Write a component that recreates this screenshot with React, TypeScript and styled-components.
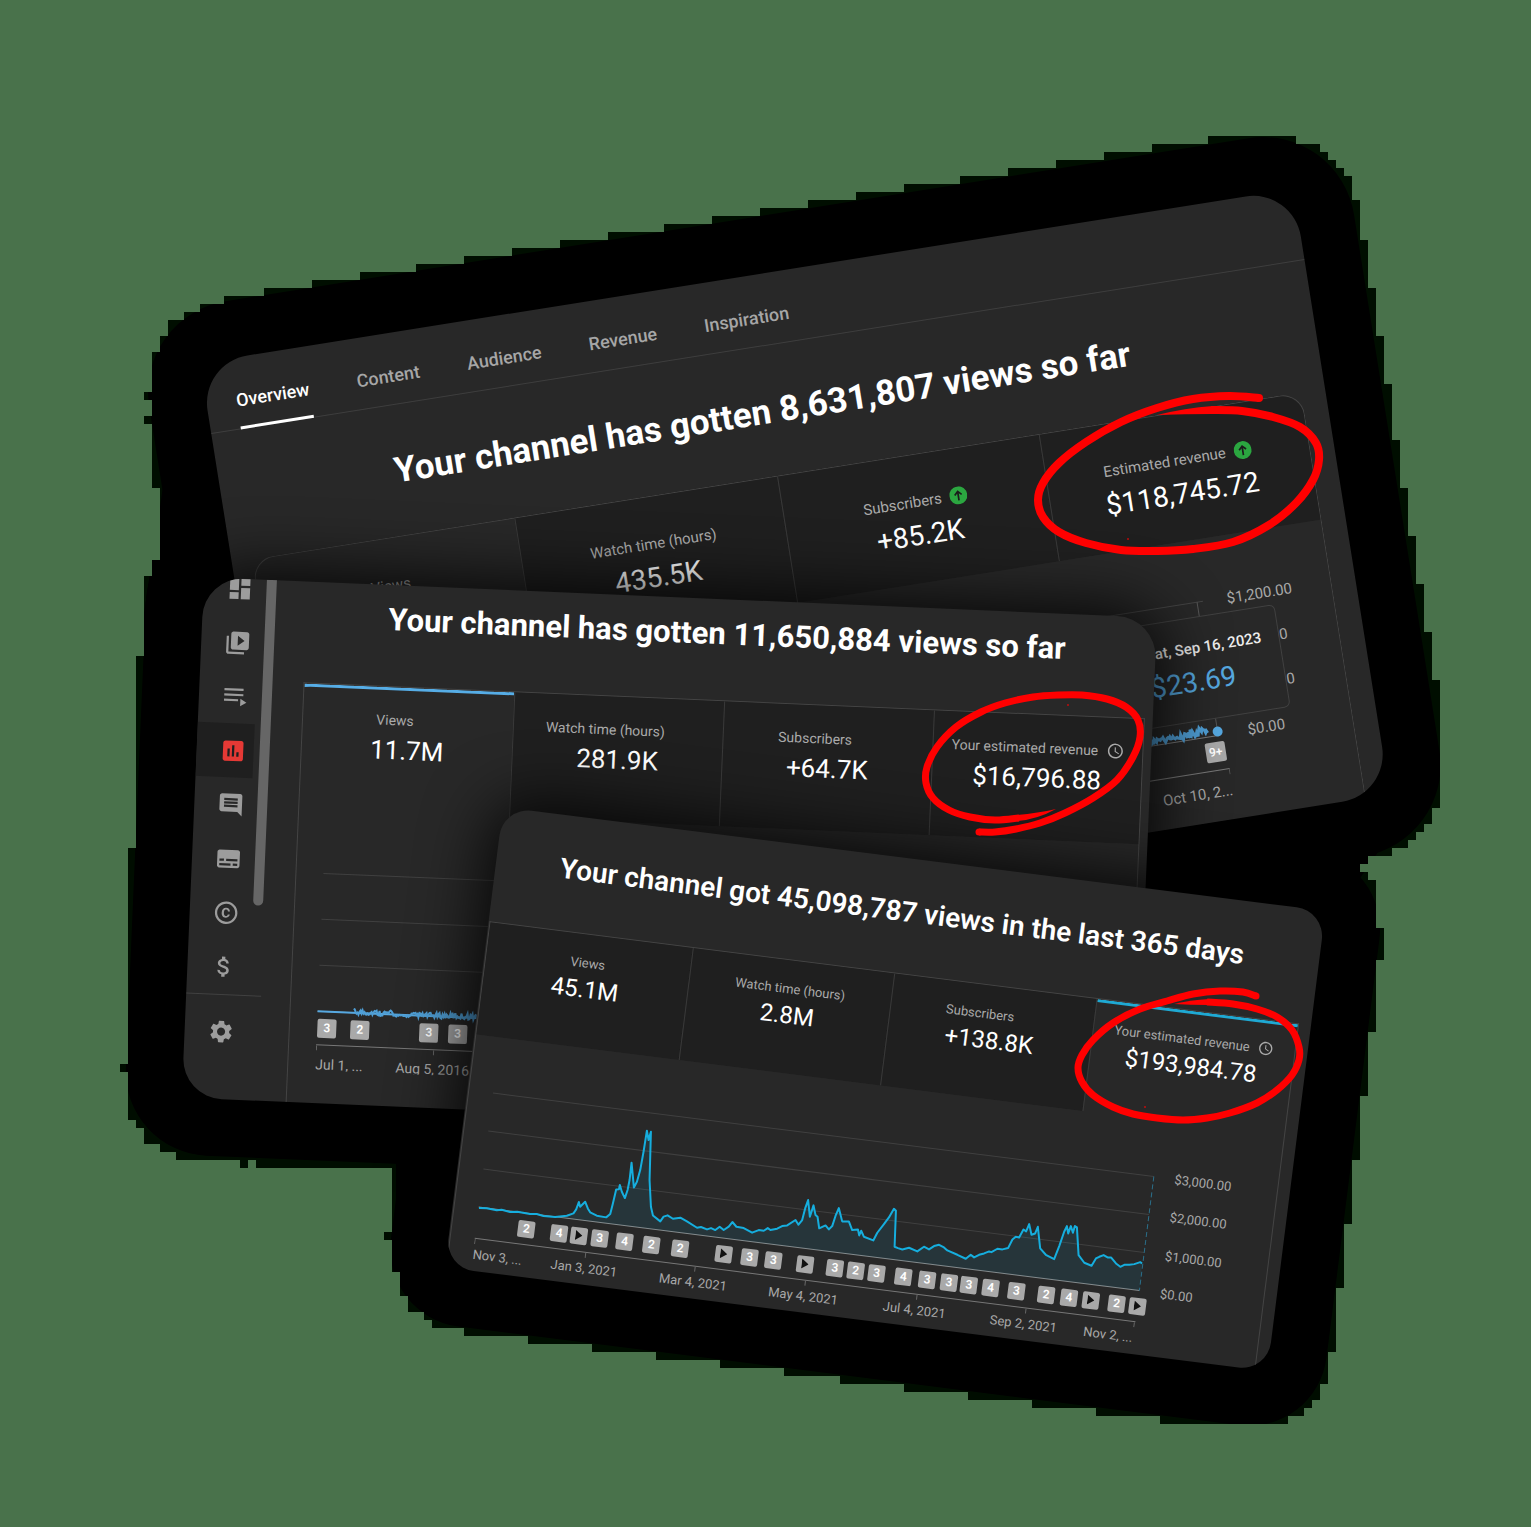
import React from "react";
import styled, { createGlobalStyle, css } from "styled-components";
import {
  MdAttachMoney,
  MdComment,
  MdCopyright,
  MdDashboard,
  MdInsertChart,
  MdSchedule,
  MdSettings,
  MdSubtitles,
  MdVideoLibrary,
} from "react-icons/md";

type Point = [number, number];

/* Stepped outline shared by the black backdrop and the card shadows */
const outline =
  "M1208 136H1296V144H1320V152H1328V160H1336V168H1344V176H1352V200H1360V240H1368V288H1376V336H1384V384H1392V440H1400V488H1408V536H1416V584H1424V632H1432V680H1440V808H1432V824H1424V832H1416V840H1408V848H1392V856H1368V864H1360V872H1368V880H1376V928H1384V960H1376V1032H1368V1096H1360V1160H1352V1224H1344V1288H1336V1352H1328V1384H1320V1400H1312V1408H1304V1416H1288V1424H1160V1416H1096V1408H1032V1400H968V1392H904V1384H840V1376H784V1368H720V1360H656V1352H592V1344H528V1336H464V1328H432V1320H424V1312H408V1296H400V1272H392V1240H384V1232H392V1168H256V1160H248V1168H240V1160H176V1152H160V1144H144V1128H136V1120H128V1072H120V1064H128V848H136V656H144V576H152V560H160V488H152V424H144V416H152V400H144V392H152V352H160V336H168V320H184V312H200V304H224V296H264V288H312V280H360V272H416V264H464V256H512V248H560V240H608V232H664V224H712V216H760V208H808V200H856V192H904V184H960V176H1008V168H1056V160H1104V152H1152V144H1208Z";

const Global = createGlobalStyle`
  * { box-sizing: border-box; }
  body {
    margin: 0;
    background: #49724b;
    font-family: Roboto, "Liberation Sans", sans-serif;
  }
  button { font: inherit; border: 0; padding: 0; color: inherit; background: none; }
  h2 { margin: 0; }
`;

const Page = styled.main`
  min-height: 100vh;
  display: flex;
  justify-content: center;
  overflow: hidden;
`;

/* Free canvas on which the three tilted cards are pinned */
const Collage = styled.div`
  position: relative;
  flex: none;
  width: 1531px;
  height: 1527px;
`;

const Cards = styled.div`
  position: absolute;
  inset: 0;
  clip-path: path("${outline}");
`;

const Layer = styled.svg`
  position: absolute;
  inset: 0;
  width: 100%;
  height: 100%;
  pointer-events: none;
`;

const Card = styled.section<{ $x: number; $y: number; $w: number; $h: number; $tilt: number; $radius: number; $shade?: boolean }>`
  position: absolute;
  left: ${(p) => p.$x}px;
  top: ${(p) => p.$y}px;
  width: ${(p) => p.$w}px;
  height: ${(p) => p.$h}px;
  transform: rotate(${(p) => p.$tilt}deg);
  transform-origin: 0 0;
  border-radius: ${(p) => p.$radius}px;
  background: #282828;
  overflow: hidden;
  display: flex;
  ${(p) => p.$shade && css`box-shadow: 0 0 64px 8px rgba(0, 0, 0, 0.85);`}
`;

const Column = styled.div<{ $padLeft?: number; $padRight?: number }>`
  flex: 1;
  min-width: 0;
  display: flex;
  flex-direction: column;
  padding-left: ${(p) => p.$padLeft ?? 0}px;
  padding-right: ${(p) => p.$padRight ?? 0}px;
`;

const Tabs = styled.nav`
  height: 72px;
  flex: none;
  display: flex;
  gap: 48px;
  padding: 15px 30px 0;
  border-bottom: 1px solid #3e3e3e;
`;

const Tab = styled.button<{ $active?: boolean }>`
  height: 57px;
  font-size: 18px;
  font-weight: 500;
  color: ${(p) => (p.$active ? "#fff" : "#a6a6a6")};
  border-bottom: 3px solid ${(p) => (p.$active ? "#fff" : "transparent")};
`;

const Title = styled.h2<{ $size: number; $weight: number; $top: number; $bottom: number; $right?: number }>`
  flex: none;
  padding: ${(p) => p.$top}px ${(p) => p.$right ?? 0}px ${(p) => p.$bottom}px 0;
  font-size: ${(p) => p.$size}px;
  line-height: 40px;
  font-weight: ${(p) => p.$weight};
  color: #fff;
  text-align: center;
  white-space: nowrap;
`;

const Panel = styled.div<{ $radius?: number }>`
  flex: 1;
  display: flex;
  flex-direction: column;
  border: 1px solid #444;
  border-bottom: 0;
  border-radius: ${(p) => p.$radius ?? 0}px ${(p) => p.$radius ?? 0}px 0 0;
`;

const Metrics = styled.div<{ $h: number; $radius?: number }>`
  flex: none;
  height: ${(p) => p.$h}px;
  display: grid;
  grid-template-columns: repeat(4, 1fr);
  border-radius: 0 ${(p) => p.$radius ?? 0}px 0 0;
  overflow: hidden;
`;

const MetricButton = styled.button<{ $selected?: boolean; $accent?: string; $top: number }>`
  display: flex;
  flex-direction: column;
  align-items: center;
  padding-top: ${(p) => p.$top}px;
  background: ${(p) => (p.$selected ? "transparent" : "#1f1f1f")};
  border-left: 1px solid #3a3a3a;
  box-shadow: ${(p) => (p.$accent ? `inset 0 3px ${p.$accent}` : "none")};
  &:first-child { border-left: 0; }
`;

const MetricLabel = styled.span<{ $size: number }>`
  display: flex;
  align-items: center;
  gap: 8px;
  height: 20px;
  font-size: ${(p) => p.$size}px;
  color: #aaa;
  white-space: nowrap;
`;

const MetricValue = styled.span<{ $size: number; $gap: number }>`
  margin-top: ${(p) => p.$gap}px;
  font-size: ${(p) => p.$size}px;
  line-height: 32px;
  color: #fff;
`;

const IconSlot = styled.span<{ $size: number }>`
  display: flex;
  width: ${(p) => p.$size}px;
  height: ${(p) => p.$size}px;
  svg { width: 100%; height: 100%; }
`;

const ChartGrid = styled.div<{ $top: number; $left: number; $side: number; $gap: number; $plot: number; $track: number }>`
  display: grid;
  grid-template-columns: 1fr ${(p) => p.$side}px;
  grid-template-rows: ${(p) => p.$plot}px ${(p) => p.$track}px auto;
  column-gap: ${(p) => p.$gap}px;
  padding: ${(p) => p.$top}px 0 0 ${(p) => p.$left}px;
`;

const Plot = styled.div`
  position: relative;
  grid-column: 1;
`;

const Drawing = styled.svg`
  display: block;
  width: 100%;
  height: 100%;
  overflow: visible;
`;

const Scale = styled.div<{ $size: number }>`
  grid-column: 2;
  display: flex;
  flex-direction: column;
  justify-content: space-between;
  margin: -7px 0 -9px;
  font-size: ${(p) => p.$size}px;
  line-height: 16px;
  color: #a8a8a8;
`;

const Track = styled.div`
  position: relative;
  grid-column: 1;
  border-bottom: 1px solid #777;
`;

const Marker = styled.button<{ $size: number; $at: number }>`
  position: absolute;
  left: ${(p) => p.$at}px;
  top: 50%;
  width: ${(p) => p.$size}px;
  height: ${(p) => p.$size}px;
  transform: translate(-50%, -50%);
  display: flex;
  align-items: center;
  justify-content: center;
  border-radius: 2px;
  background: #a9a9a9;
  color: #fff;
  font-size: 12px;
  font-weight: 600;
`;

const Dates = styled.div<{ $size: number; $h: number }>`
  position: relative;
  grid-column: 1;
  height: ${(p) => p.$h}px;
  overflow: hidden;
  font-size: ${(p) => p.$size}px;
  line-height: 16px;
  color: #a8a8a8;
`;

const DateTick = styled.span<{ $at: number; $align: "start" | "center" | "end"; $top: number }>`
  position: absolute;
  top: 0;
  left: ${(p) => p.$at}px;
  padding-top: ${(p) => p.$top}px;
  white-space: nowrap;
  transform: translateX(${(p) => (p.$align === "start" ? "0" : p.$align === "end" ? "-100%" : "-50%")});
  &::before {
    content: "";
    position: absolute;
    top: 0;
    left: ${(p) => (p.$align === "start" ? "0" : p.$align === "end" ? "calc(100% - 1px)" : "50%")};
    height: 5px;
    border-left: 1px solid #666;
  }
`;

const Tooltip = styled.div`
  position: absolute;
  z-index: 1;
  top: 14px;
  right: -70px;
  width: 155px;
  height: 104px;
  padding: 20px 0 0 19px;
  display: flex;
  flex-direction: column;
  gap: 8px;
  background: #282828;
  border: 1px solid #414141;
  border-radius: 6px;
  white-space: nowrap;
`;

const TooltipDate = styled.span`
  font-size: 15px;
  line-height: 20px;
  font-weight: 500;
  color: #eee;
`;

const TooltipValue = styled.span`
  font-size: 28px;
  line-height: 32px;
  color: #56a8e0;
`;

const Rail = styled.nav`
  flex: none;
  width: 104px;
  display: flex;
`;

const RailItems = styled.div`
  width: 63px;
  margin-top: -17px;
  display: flex;
  flex-direction: column;
`;

const RailButton = styled.button<{ $active?: boolean }>`
  flex: none;
  width: 57px;
  height: 54px;
  display: flex;
  align-items: center;
  justify-content: center;
  padding-left: 15px;
  font-size: 27px;
  color: ${(p) => (p.$active ? "#e53935" : "#9c9c9c")};
  background: ${(p) => (p.$active ? "#1f1f1f" : "transparent")};
`;

const RailRule = styled.span`
  flex: none;
  width: 75px;
  margin: 1px 0 9px;
  border-top: 1px solid #414141;
`;

const Scrollbar = styled.span`
  width: 10px;
  height: 326px;
  border-radius: 0 0 5px 5px;
  background: #666;
`;

const RisingIcon = () => (
  <svg viewBox="0 0 18 18" aria-hidden="true">
    <circle cx="9" cy="9" r="9" fill="#2ba640" />
    <path d="M9 14V5M5.5 8.5L9 5L12.5 8.5" fill="none" stroke="#1b1b1b" strokeWidth="1.7" />
  </svg>
);

const PlaylistIcon = () => (
  <svg width="1em" height="1em" viewBox="0 0 24 24" fill="currentColor" aria-hidden="true">
    <path d="M2 4.5H19V6.4H2ZM2 9.2H19V11.1H2ZM2 13.9H14.5V15.8H2ZM16.5 13.5L22 16.8L16.5 20Z" />
  </svg>
);

interface Stat {
  label: string;
  value: string;
  icon?: React.ReactNode;
  slot?: boolean;
}

interface MetricRowProps {
  stats: Stat[];
  height: number;
  top: number;
  gap: number;
  labelSize: number;
  valueSize: number;
  iconSize: number;
  selected: number;
  accent?: string;
  radius?: number;
}

const MetricRow = (p: MetricRowProps) => (
  <Metrics $h={p.height} $radius={p.radius}>
    {p.stats.map((s, i) => (
      <MetricButton key={s.label} $selected={i === p.selected} $accent={i === p.selected ? p.accent : undefined} $top={p.top}>
        <MetricLabel $size={p.labelSize}>
          {s.label}
          {(s.icon || s.slot) && <IconSlot $size={p.iconSize}>{s.icon}</IconSlot>}
        </MetricLabel>
        <MetricValue $size={p.valueSize} $gap={p.gap}>{s.value}</MetricValue>
      </MetricButton>
    ))}
  </Metrics>
);

const PlayGlyph = () => (
  <svg width="7" height="10" viewBox="0 0 7 10" aria-label="Video">
    <path d="M0 0L7 5L0 10Z" fill="#111" />
  </svg>
);

const GridLines = ({ width, height }: { width: number; height: number }) => (
  <g stroke="#404040">
    {[0, 1, 2].map((i) => (
      <path key={i} d={`M0 ${(height * i) / 3}H${width}`} />
    ))}
    <path d={`M0 ${height}H${width}`} stroke="#8a8a8a" />
  </g>
);

interface Mark { at: number; text: string }
interface Tick { at: number; text: string; align?: "start" | "center" | "end" }

const Timeline = (p: { marks: Mark[]; ticks: Tick[]; markSize: number; textSize: number; labelTop: number; labelHeight: number }) => (
  <>
    <Track>
      {p.marks.map((m) => (
        <Marker key={m.at} $at={m.at} $size={p.markSize}>
          {m.text === "play" ? <PlayGlyph /> : m.text}
        </Marker>
      ))}
    </Track>
    <Dates $size={p.textSize} $h={p.labelHeight}>
      {p.ticks.map((t) => (
        <DateTick key={t.at} $at={t.at} $align={t.align ?? "center"} $top={p.labelTop}>{t.text}</DateTick>
      ))}
    </Dates>
  </>
);

/* Deterministic jitter for the two nearly flat series */
const jitter = (from: number, to: number, base: number, amp: (t: number) => number) => {
  const pts: string[] = [];
  for (let x = from; x <= to; x += 1) {
    const n = Math.abs(Math.sin(x * 12.9898) * 43758.5453) % 1;
    pts.push(`${x},${(base - n * amp((x - from) / (to - from))).toFixed(1)}`);
  }
  return pts.join(" ");
};

const lifetime: Stat[] = [
  { label: "Views", value: "8.6M" },
  { label: "Watch time (hours)", value: "435.5K" },
  { label: "Subscribers", value: "+85.2K", icon: <RisingIcon /> },
  { label: "Estimated revenue", value: "$118,745.72", icon: <RisingIcon /> },
];

const OverviewCard = () => (
  <Card $x={200} $y={363} $w={1107} $h={613} $tilt={-9.05} $radius={48}>
    <Column>
      <Tabs>
        {["Overview", "Content", "Audience", "Revenue", "Inspiration"].map((t, i) => (
          <Tab key={t} $active={i === 0}>{t}</Tab>
        ))}
      </Tabs>
      <Title $size={35} $weight={700} $top={46} $bottom={44} $right={12}>Your channel has gotten 8,631,807 views so far</Title>
      <Column $padLeft={20} $padRight={24}>
        <Panel $radius={22}>
          <MetricRow stats={lifetime} height={128} top={37} gap={8} labelSize={15} valueSize={28} iconSize={18} selected={0} radius={22} />
          <ChartGrid $top={62} $left={24} $side={105} $gap={24} $plot={133} $track={37}>
            <Plot>
              <Drawing viewBox="0 0 908 133" preserveAspectRatio="none">
                <path d="M0 0H908" stroke="#444" />
                <path d="M902 0V133" stroke="#555" />
                <path d="M0 135H902" stroke="#777" />
                <polyline points={jitter(600, 892, 134, (t) => (t > 0.93 ? 10 : 6))} fill="none" stroke="#4f9fd6" strokeWidth="3" />
                <circle cx="902" cy="131" r="5" fill="#56a8e0" />
              </Drawing>
              <Tooltip>
                <TooltipDate>Sat, Sep 16, 2023</TooltipDate>
                <TooltipValue>$23.69</TooltipValue>
              </Tooltip>
            </Plot>
            <Scale $size={15}>
              <span>$1,200.00</span>
              <span>$800.00</span>
              <span>$400.00</span>
              <span>$0.00</span>
            </Scale>
            <Timeline
              marks={[{ at: 897, text: "9+" }]}
              ticks={[{ at: 908, text: "Oct 10, 2...", align: "end" }]}
              markSize={20}
              textSize={15}
              labelTop={13}
              labelHeight={40}
            />
          </ChartGrid>
        </Panel>
      </Column>
    </Column>
  </Card>
);

const railIcons: [string, React.ComponentType][] = [
  ["Dashboard", MdDashboard],
  ["Content", MdVideoLibrary],
  ["Playlists", PlaylistIcon],
  ["Analytics", MdInsertChart],
  ["Comments", MdComment],
  ["Subtitles", MdSubtitles],
  ["Copyright", MdCopyright],
  ["Earn", MdAttachMoney],
];

const studio: Stat[] = [
  { label: "Views", value: "11.7M", slot: true },
  { label: "Watch time (hours)", value: "281.9K", slot: true },
  { label: "Subscribers", value: "+64.7K", slot: true },
  { label: "Your estimated revenue", value: "$16,796.88", icon: <MdSchedule /> },
];

const StudioCard = () => (
  <Card $x={204} $y={577} $w={954} $h={521} $tilt={2.45} $radius={40} $shade>
    <Rail>
      <RailItems>
        {railIcons.map(([name, Icon]) => (
          <RailButton key={name} aria-label={name} $active={name === "Analytics"}>
            <Icon />
          </RailButton>
        ))}
        <RailRule />
        <RailButton aria-label="Settings"><MdSettings /></RailButton>
      </RailItems>
      <Scrollbar />
    </Rail>
    <Column $padRight={8}>
      <Title $size={31} $weight={700} $top={15} $bottom={46}>Your channel has gotten 11,650,884 views so far</Title>
      <Panel>
        <MetricRow stats={studio} height={125} top={23} gap={4} labelSize={14} valueSize={26} iconSize={18} selected={0} accent="#56ade6" />
        <ChartGrid $top={64} $left={27} $side={100} $gap={24} $plot={138} $track={34}>
          <Plot>
            <Drawing viewBox="0 0 689 138" preserveAspectRatio="none">
              <GridLines width={689} height={138} />
              <path d="M0 138H689" stroke="#56a8e0" strokeWidth="2" />
              <polyline
                points={jitter(36, 200, 140, (t) => (t < 0.25 ? 6 : t < 0.35 ? 2 : 3 + t * 5))}
                fill="none"
                stroke="#4f9fd6"
                strokeWidth="2"
              />
            </Drawing>
          </Plot>
          <Scale $size={14} />
          <Timeline
            marks={[
              { at: 10, text: "3" },
              { at: 43, text: "2" },
              { at: 112, text: "3" },
              { at: 141, text: "3" },
            ]}
            ticks={[
              { at: 0, text: "Jul 1, ...", align: "start" },
              { at: 117, text: "Aug 5, 2016" },
            ]}
            markSize={19}
            textSize={14}
            labelTop={11}
            labelHeight={25}
          />
        </ChartGrid>
      </Panel>
    </Column>
  </Card>
);

const yearly: Stat[] = [
  { label: "Views", value: "45.1M" },
  { label: "Watch time (hours)", value: "2.8M" },
  { label: "Subscribers", value: "+138.8K", slot: true },
  { label: "Your estimated revenue", value: "$193,984.78", icon: <MdSchedule /> },
];

const yearMarks: Mark[] = [
  [50, "2"], [83, "4"], [103, "play"], [124, "3"], [149, "4"], [176, "2"], [205, "2"], [249, "play"],
  [275, "3"], [299, "3"], [331, "play"], [361, "3"], [382, "2"], [403, "3"], [430, "4"], [454, "3"],
  [476, "3"], [496, "3"], [518, "4"], [544, "3"], [574, "2"], [597, "4"], [619, "play"], [645, "2"], [666, "play"],
].map(([at, text]) => ({ at: at as number, text: text as string }));

/* Daily revenue, sampled in thirds of a pixel on the tilted sheet */
const firstHalf: Point[] = [
  [147, 384], [170, 385], [200, 391], [215, 389], [240, 396], [262, 395], [300, 402], [320, 402], [340, 408], [375, 411], [410, 407], [430, 400], [438, 388], [446, 366], [450, 380],
  [465, 365], [473, 385], [480, 397], [500, 407], [528, 412], [540, 402], [548, 370], [558, 328], [566, 328], [569, 315], [575, 335],
  [584, 354], [592, 330], [598, 300], [604, 248], [611, 322], [620, 305], [630, 270], [640, 215], [650, 152], [655, 180], [662, 155],
  [658, 300], [662, 380], [668, 406], [690, 424], [700, 410], [712, 406], [728, 416], [750, 413], [770, 424], [800, 443], [812, 441], [830, 448], [842, 444],
  [855, 450], [868, 440], [880, 450], [895, 440], [906, 426], [918, 440], [940, 444], [965, 458], [985, 450], [1000, 452], [1012, 444], [1020, 450], [1040, 446], [1055, 438], [1070, 436],
  [1095, 420], [1104, 434], [1115, 420], [1124, 385], [1133, 360], [1138, 410], [1149, 376], [1155, 405], [1161, 410], [1166, 445],
  [1185, 436], [1195, 448], [1205, 438], [1216, 405], [1225, 384], [1235, 424],
];
const secondHalf: Point[] = [
  [205, 304], [215, 330], [232, 328], [236, 346], [242, 332], [250, 350], [278, 361], [290, 338], [310, 312], [325, 292], [340, 266],
  [346, 272], [342, 380], [352, 384], [365, 388], [385, 383], [410, 394], [430, 380], [445, 388], [460, 378], [475, 374], [490, 382], [500, 391], [530, 404], [555, 416], [570, 404],
  [580, 412], [595, 404], [610, 400], [625, 394], [632, 396], [650, 386], [665, 388], [682, 384], [695, 358], [705, 350], [715, 352], [728, 328], [736, 334], [745, 312], [752, 344],
  [763, 340], [771, 320], [778, 385], [795, 404], [820, 417], [835, 378], [850, 335], [858, 318], [862, 340], [870, 318], [876, 338],
  [882, 318], [888, 322], [893, 405], [910, 428], [932, 437], [945, 415], [955, 410], [968, 405], [980, 412], [990, 412], [1005, 430], [1018, 440], [1030, 434], [1045, 434], [1060, 432], [1078, 426], [1083, 430],
];
const tilt = (7.2 * Math.PI) / 180;
const revenue = [...firstHalf, ...secondHalf.map(([x, y]): Point => [x + 1050, y + 120])]
  .map(([x, y]): Point => [x / 3 - 73, y / 3 + 273])
  .map(([x, y]) => [
    x * Math.cos(tilt) + y * Math.sin(tilt) - 26,
    y * Math.cos(tilt) - x * Math.sin(tilt) - 285,
  ].map((n) => n.toFixed(1)).join(","))
  .join(" ");

const YearCard = () => (
  <Card $x={503} $y={807} $w={829} $h={464} $tilt={7.2} $radius={29} $shade>
    <Column $padLeft={1} $padRight={12}>
      <Title $size={28} $weight={600} $top={34} $bottom={41}>Your channel got 45,098,787 views in the last 365 days</Title>
      <Panel>
        <MetricRow stats={yearly} height={113} top={18} gap={1} labelSize={13} valueSize={24} iconSize={16} selected={3} accent="#1fa9d3" />
        <ChartGrid $top={56} $left={24} $side={103} $gap={21} $plot={115} $track={32}>
          <Plot>
            <Drawing viewBox="0 0 665 115" preserveAspectRatio="none">
              <GridLines width={665} height={115} />
              <polygon points={`0,115 ${revenue} 665,115`} fill="#1fb4e6" fillOpacity="0.1" />
              <polyline points={revenue} fill="none" stroke="#16aede" strokeWidth="2" strokeLinejoin="round" />
              <path d="M665 0V115" stroke="#2b6f8a" strokeDasharray="5 3" />
            </Drawing>
          </Plot>
          <Scale $size={13}>
            <span>$3,000.00</span>
            <span>$2,000.00</span>
            <span>$1,000.00</span>
            <span>$0.00</span>
          </Scale>
          <Timeline
            marks={yearMarks}
            ticks={[
              { at: 0, text: "Nov 3, ...", align: "start" },
              { at: 112, text: "Jan 3, 2021" },
              { at: 222, text: "Mar 4, 2021" },
              { at: 333, text: "May 4, 2021" },
              { at: 445, text: "Jul 4, 2021" },
              { at: 555, text: "Sep 2, 2021" },
              { at: 665, text: "Nov 2, ...", align: "end" },
            ]}
            markSize={17}
            textSize={13}
            labelTop={8}
            labelHeight={30}
          />
        </ChartGrid>
      </Panel>
    </Column>
  </Card>
);

const Backdrop = () => (
  <Layer viewBox="0 0 1531 1527" aria-hidden="true">
    <clipPath id="steps"><path d={outline} /></clipPath>
    <path d={outline} fill="#000e00" />
    <g clipPath="url(#steps)">
      <path d="M170 440L300 480H1200L1400 820L1345 900L1250 1200L600 1250L396 1250V1164L140 640Z" />
      <rect x="-57" y="-57" width="1220" height="727" rx="92" transform="translate(200 363) rotate(-9.05)" />
      <rect x="-57" y="-57" width="1068" height="635" rx="84" transform="translate(204 577) rotate(2.45)" />
      <rect x="-57" y="-57" width="943" height="578" rx="78" transform="translate(503 807) rotate(7.2)" />
    </g>
  </Layer>
);

/* Catmull-Rom spline through the hand-drawn points */
const smooth = (pts: Point[]) => {
  let d = `M${pts[0][0]} ${pts[0][1]}`;
  for (let i = 0; i < pts.length - 1; i += 1) {
    const a = pts[i - 1] ?? pts[i];
    const b = pts[i];
    const c = pts[i + 1];
    const e = pts[i + 2] ?? c;
    d += `C${b[0] + (c[0] - a[0]) / 6} ${b[1] + (c[1] - a[1]) / 6} ${c[0] - (e[0] - b[0]) / 6} ${c[1] - (e[1] - b[1]) / 6} ${c[0]} ${c[1]}`;
  }
  return d;
};

const rings: { pts: Point[]; width: number; tail: string; dot: Point }[] = [
  {
    pts: [
      [1259, 398], [1229, 396], [1193, 399], [1157, 408], [1121, 422], [1086, 442], [1059, 463], [1043, 483], [1038, 500], [1043, 517],
      [1059, 532], [1086, 543], [1121, 550], [1157, 551], [1193, 549], [1233, 542], [1269, 525], [1296, 503], [1313, 480], [1319, 460],
      [1316, 443], [1300, 427], [1273, 417], [1242, 411], [1211, 410],
    ],
    width: 8,
    tail: "M1213 406Q1185 408 1157 415Q1185 414 1213 414Z",
    dot: [1128, 539],
  },
  {
    pts: [
      [979, 832], [995, 832], [1016, 829], [1040, 823], [1065, 813], [1093, 798], [1117, 780], [1133, 757], [1140, 737], [1138, 720],
      [1126, 707], [1107, 699], [1082, 695], [1058, 695], [1033, 697], [1005, 703], [981, 712], [956, 727], [937, 747], [927, 767],
      [926, 783], [933, 798], [949, 810], [970, 817], [995, 820], [1019, 818],
    ],
    width: 7,
    tail: "M1017 815Q1038 813 1056 809Q1038 819 1018 821Z",
    dot: [1068, 705],
  },
  {
    pts: [
      [1256, 996], [1243, 992], [1220, 991], [1193, 994], [1167, 1001], [1140, 1009], [1113, 1023], [1093, 1040], [1082, 1055], [1078, 1068],
      [1082, 1082], [1093, 1095], [1113, 1107], [1133, 1114], [1157, 1118], [1183, 1120], [1207, 1118], [1230, 1113], [1257, 1103],
      [1277, 1090], [1292, 1075], [1299, 1060], [1299, 1047], [1292, 1030], [1277, 1017], [1257, 1009], [1233, 1004], [1207, 1002],
    ],
    width: 7,
    tail: "M1209 999Q1190 1000 1174 1004Q1190 1005 1208 1005Z",
    dot: [1145, 1107],
  },
];

const Rings = () => (
  <Layer viewBox="0 0 1531 1527" aria-hidden="true">
    {rings.map((r) => (
      <g key={r.tail} fill="#f00">
        <path d={smooth(r.pts)} fill="none" stroke="#f00" strokeWidth={r.width} strokeLinejoin="round" />
        <circle cx={r.pts[0][0]} cy={r.pts[0][1]} r={r.width / 2} />
        <path d={r.tail} />
        <circle cx={r.dot[0]} cy={r.dot[1]} r="1" opacity="0.7" />
      </g>
    ))}
  </Layer>
);

export default function App() {
  return (
    <Page>
      <Global />
      <Collage>
        <Backdrop />
        <Cards>
          <OverviewCard />
          <StudioCard />
          <YearCard />
        </Cards>
        <Rings />
      </Collage>
    </Page>
  );
}
